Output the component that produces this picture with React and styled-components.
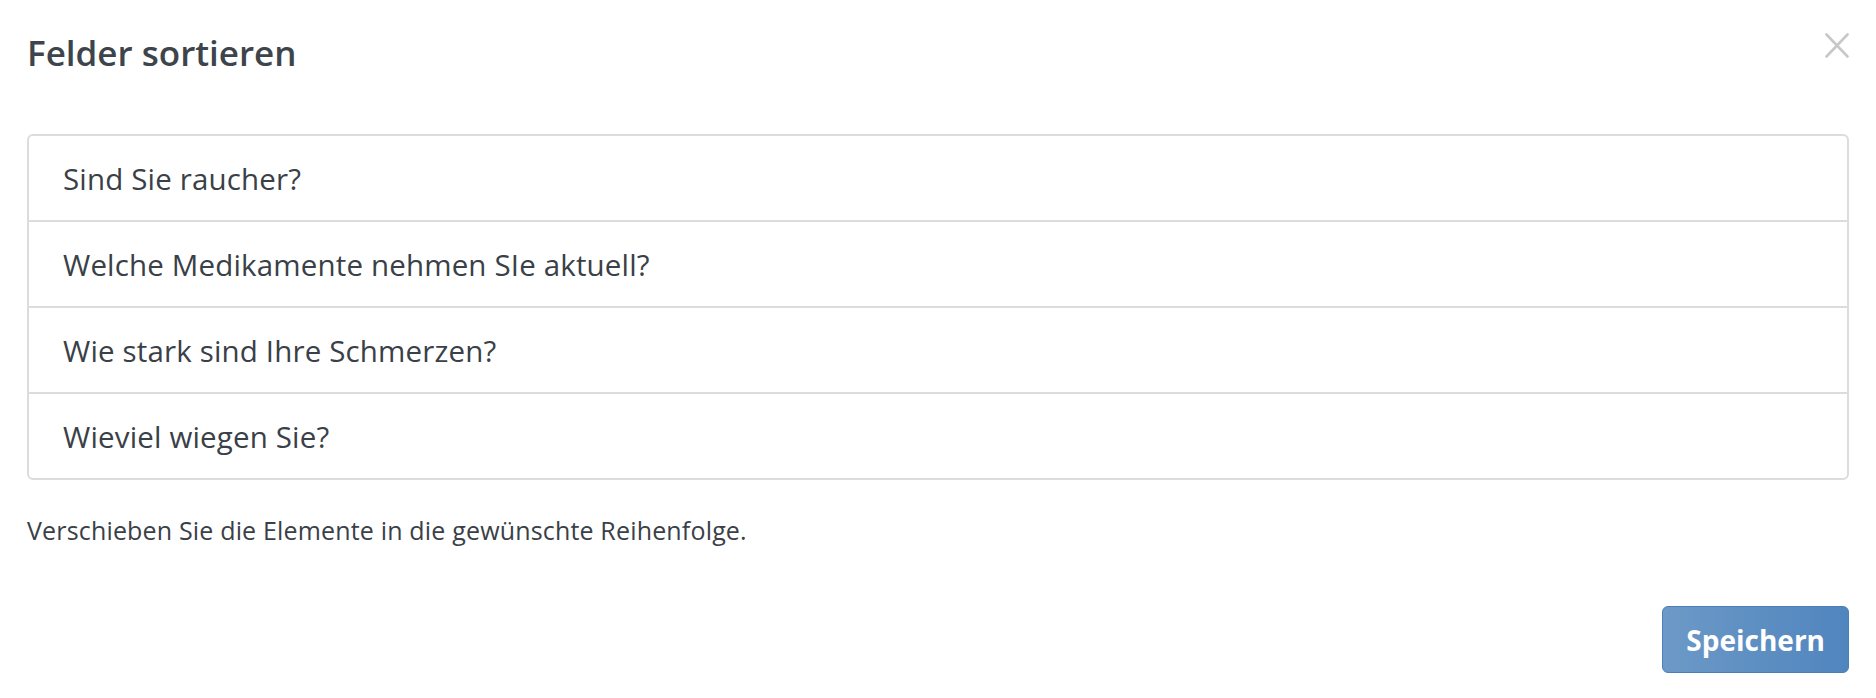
import React from "react";
import styled, { createGlobalStyle } from "styled-components";

const GlobalStyle = createGlobalStyle`
  html, body {
    margin: 0;
    padding: 0;
    background: #ffffff;
  }
  body {
    font-family: "Open Sans", "Liberation Sans", sans-serif;
    color: #3a4047;
  }
`;

const Modal = styled.div`
  padding: 0 27px;
  box-sizing: border-box;
  width: 100%;
`;

const Header = styled.div`
  display: flex;
  justify-content: space-between;
  align-items: flex-start;
  padding-top: 31px;
`;

const Title = styled.h1`
  margin: 0;
  font-size: 35px;
  line-height: 44px;
  font-weight: 600;
  color: #3d444b;
`;

const Close = styled.button`
  margin-top: 2px;
  width: 24px;
  height: 25px;
  padding: 0;
  border: none;
  background: none;
  cursor: pointer;
  display: flex;
`;

const List = styled.ul`
  list-style: none;
  margin: 59px 0 0;
  padding: 0;
  border: 2px solid #dcdcdc;
  border-radius: 6px;
`;

const Item = styled.li`
  height: 82px;
  padding: 2px 34px 0;
  line-height: 82px;
  font-size: 29.5px;
  letter-spacing: 0.16px;
  color: #3a4047;
  border-bottom: ${(p) => (p.last ? "none" : "2px solid #dcdcdc")};
`;

const Hint = styled.p`
  margin: 34px 0 0;
  font-size: 25px;
  letter-spacing: 0.17px;
  line-height: 32px;
  color: #3a4047;
`;

const Footer = styled.div`
  display: flex;
  justify-content: flex-end;
  margin-top: 60px;
`;

const SaveButton = styled.button`
  height: 67px;
  padding: 0 23px;
  border: 1px solid #4b7fb7;
  border-radius: 6px;
  background: linear-gradient(to right, #6c99c7, #5085be);
  color: #ffffff;
  font-family: "Open Sans", "Liberation Sans", sans-serif;
  font-size: 28px;
  font-weight: 700;
  display: flex;
  align-items: center;
  cursor: pointer;
`;

const fields = [
  "Sind Sie raucher?",
  "Welche Medikamente nehmen SIe aktuell?",
  "Wie stark sind Ihre Schmerzen?",
  "Wieviel wiegen Sie?",
];

const App = () => {
  return (
    <>
      <GlobalStyle />
      <Modal>
        <Header>
          <Title>Felder sortieren</Title>
          <Close aria-label="Schließen">
            <svg width="24" height="25" viewBox="0 0 24 25">
              <path
                d="M1.5 1.5 L22.5 23.5 M22.5 1.5 L1.5 23.5"
                stroke="#c8c8c8"
                strokeWidth="2.6"
                strokeLinecap="round"
              />
            </svg>
          </Close>
        </Header>
        <List>
          {fields.map((field, index) => (
            <Item key={index} last={index === fields.length - 1}>
              {field}
            </Item>
          ))}
        </List>
        <Hint>Verschieben Sie die Elemente in die gewünschte Reihenfolge.</Hint>
        <Footer>
          <SaveButton>Speichern</SaveButton>
        </Footer>
      </Modal>
    </>
  );
};

export default App;
